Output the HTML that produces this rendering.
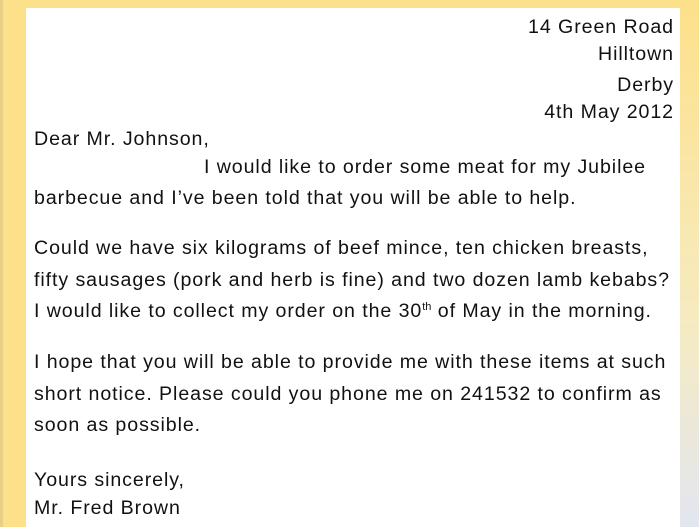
<!DOCTYPE html>
<html><head><style>
html,body{margin:0;padding:0;}
body{width:699px;height:527px;overflow:hidden;position:relative;background:linear-gradient(180deg,#fde08a 0%,#f6ebc0 60%,#e2e6f0 100%);}
.left{position:absolute;left:0;top:0;width:26px;height:527px;background:#fde08a;}
.left:before{content:"";position:absolute;left:0;top:0;width:3px;height:527px;background:#e9cf84;}
.paper{position:absolute;left:26px;top:8px;width:654px;height:519px;background:#fff;}
.l{position:absolute;font-family:"Liberation Sans",sans-serif;font-size:19.6px;letter-spacing:0.92px;color:#111;white-space:nowrap;line-height:20px;}
.r{right:25px;text-align:right;}
sup{font-size:11px;line-height:0;vertical-align:7px;letter-spacing:0;}
</style></head><body>
<div class="left"></div>
<div class="paper"></div>
<div class="l r" style="top:17px">14 Green Road</div>
<div class="l r" style="top:44px">Hilltown</div>
<div class="l r" style="top:75px">Derby</div>
<div class="l r" style="top:102px">4th May 2012</div>
<div class="l" style="left:34px;top:129px">Dear Mr. Johnson,</div>
<div class="l" style="left:204px;top:157px">I would like to order some meat for my Jubilee</div>
<div class="l" style="left:34px;top:188px">barbecue and I’ve been told that you will be able to help.</div>
<div class="l" style="left:34px;top:238px">Could we have six kilograms of beef mince, ten chicken breasts,</div>
<div class="l" style="left:34px;top:270px">fifty sausages (pork and herb is fine) and two dozen lamb kebabs?</div>
<div class="l" style="left:34px;top:301px">I would like to collect my order on the 30<sup>th</sup> of May in the morning.</div>
<div class="l" style="left:34px;top:352px">I hope that you will be able to provide me with these items at such</div>
<div class="l" style="left:34px;top:384px">short notice. Please could you phone me on 241532 to confirm as</div>
<div class="l" style="left:34px;top:415px">soon as possible.</div>
<div class="l" style="left:34px;top:470px">Yours sincerely,</div>
<div class="l" style="left:34px;top:498px">Mr. Fred Brown</div>
</body></html>
